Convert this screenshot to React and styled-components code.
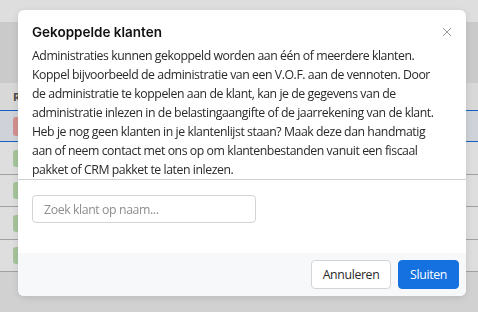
import React from 'react';
import styled, { createGlobalStyle } from 'styled-components';

const GlobalStyle = createGlobalStyle`
  html, body {
    margin: 0;
    padding: 0;
    width: 478px;
    height: 312px;
    overflow: hidden;
    font-family: "Open Sans", "Liberation Sans", sans-serif;
  }
  * { box-sizing: border-box; }
`;

// Page behind the dialog
const Page = styled.div`
  width: 478px;
  height: 312px;
  background: #f1f1f1;
  display: flex;
  flex-direction: column;
`;

const TopBar = styled.div`
  height: 22px;
  background: #ffffff;
`;

const Toolbar = styled.div`
  height: 61px;
  background: #e9e9e9;
`;

const Table = styled.div`
  display: flex;
  flex-direction: column;
  background: #ffffff;
`;

const HeaderRow = styled.div`
  height: 27px;
  display: flex;
  align-items: center;
  padding-left: 13px;
  font-size: 11px;
  font-weight: 700;
  color: #555;
  background: #f8f8f8;
`;

const Row = styled.div`
  height: ${p => (p.$selected ? '32px' : '32.5px')};
  display: flex;
  align-items: center;
  padding-left: 13px;
  background: ${p => (p.$selected ? '#eef2f8' : '#ffffff')};
  border-top: 1px solid ${p => (p.$selected ? '#1a6fe0' : 'transparent')};
  border-bottom: 1px solid ${p => (p.$selected ? '#1a6fe0' : '#b9b9b9')};
`;

const Badge = styled.span`
  width: 20px;
  height: ${p => (p.$red ? '19px' : '17px')};
  border-radius: 3px;
  background: ${p => (p.$red ? '#f3a7a7' : '#bfe3b4')};
`;

// Dialog
const Overlay = styled.div`
  position: fixed;
  inset: 0;
  background: rgba(0, 0, 0, 0.13);
  display: flex;
  align-items: flex-start;
  padding: 10px 12px 0 18px;
`;

const Modal = styled.div`
  width: 448px;
  height: 286px;
  background: #ffffff;
  border-radius: 6px;
  box-shadow: 0 2px 8px rgba(0, 0, 0, 0.12);
  display: flex;
  flex-direction: column;
  overflow: hidden;
`;

const Header = styled.div`
  display: flex;
  align-items: center;
  justify-content: space-between;
  padding: 12px 14px 0 14px;
`;

const Title = styled.h2`
  margin: 0;
  font-family: Inter, "Noto Sans", sans-serif;
  font-size: 13.5px;
  font-weight: 600;
  line-height: 20px;
  color: #111;
`;

const Close = styled.button`
  border: none;
  background: none;
  padding: 0;
  width: 10px;
  height: 10px;
  display: flex;
  cursor: pointer;
`;

const Body = styled.p`
  margin: 4px 0 0;
  padding: 0 14px;
  font-size: 12.3px;
  letter-spacing: -0.45px;
  line-height: 19px;
  color: #2a2a2a;
  white-space: nowrap;
`;

const Divider = styled.hr`
  margin: 0;
  border: none;
  border-top: 1px solid #cfcfcf;
`;

const SearchSection = styled.div`
  padding: 15px 14px;
  flex: 1;
`;

const SearchInput = styled.input`
  width: 224px;
  height: 28px;
  border: 1px solid #d3d3d3;
  border-radius: 4px;
  padding: 0 11px;
  font-family: "Open Sans", sans-serif;
  font-size: 12.3px;
  letter-spacing: -0.4px;
  color: #333;
  outline: none;
  &::placeholder { color: #8e8e8e; }
`;

const Footer = styled.div`
  height: 43px;
  background: #f7f8fa;
  display: flex;
  align-items: center;
  justify-content: flex-end;
  gap: 7px;
  padding: 0 7px;
`;

const Button = styled.button`
  height: 29px;
  width: ${p => (p.$primary ? '61px' : '80px')};
  padding: 0;
  border-radius: 4px;
  font-family: "Open Sans", sans-serif;
  font-size: 12.3px;
  letter-spacing: -0.35px;
  cursor: pointer;
  border: 1px solid ${p => (p.$primary ? '#1570e0' : '#d4d4d4')};
  background: ${p => (p.$primary ? '#1570e0' : '#ffffff')};
  color: ${p => (p.$primary ? '#ffffff' : '#2a2a2a')};
`;

const rows = [false, false, false, false];

const lines = [
  'Administraties kunnen gekoppeld worden aan één of meerdere klanten.',
  'Koppel bijvoorbeeld de administratie van een V.O.F. aan de vennoten. Door',
  'de administratie te koppelen aan de klant, kan je de gegevens van de',
  'administratie inlezen in de belastingaangifte of de jaarrekening van de klant.',
  'Heb je nog geen klanten in je klantenlijst staan? Maak deze dan handmatig',
  'aan of neem contact met ons op om klantenbestanden vanuit een fiscaal',
  'pakket of CRM pakket te laten inlezen.',
];

export default function App() {
  return (
    <>
      <GlobalStyle />
      <Page>
        <TopBar />
        <Toolbar />
        <Table>
          <HeaderRow>R</HeaderRow>
          <Row $selected><Badge $red /></Row>
          {rows.map((_, i) => (
            <Row key={i}><Badge /></Row>
          ))}
        </Table>
      </Page>
      <Overlay>
        <Modal>
          <Header>
            <Title>Gekoppelde klanten</Title>
            <Close aria-label="Sluiten">
              <svg width="10" height="10" viewBox="0 0 10 10">
                <path d="M1 1L9 9M9 1L1 9" stroke="#9a9a9a" strokeWidth="1" />
              </svg>
            </Close>
          </Header>
          <Body>
            {lines.map((l, i) => (
              <React.Fragment key={i}>
                {l}
                {i < lines.length - 1 && <br />}
              </React.Fragment>
            ))}
          </Body>
          <Divider />
          <SearchSection>
            <SearchInput placeholder="Zoek klant op naam..." />
          </SearchSection>
          <Footer>
            <Button>Annuleren</Button>
            <Button $primary>Sluiten</Button>
          </Footer>
        </Modal>
      </Overlay>
    </>
  );
}
